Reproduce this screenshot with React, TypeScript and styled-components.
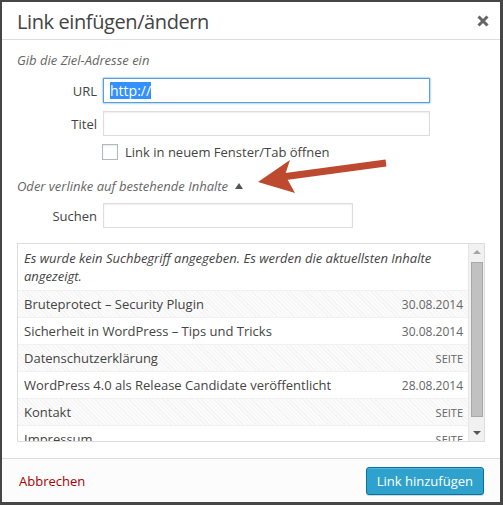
import React from 'react';
import styled, { createGlobalStyle } from 'styled-components';

const GlobalStyle = createGlobalStyle`
  html, body {
    margin: 0;
    padding: 0;
    background: #464646;
  }
  body {
    font-family: "Open Sans", "Noto Sans", sans-serif;
    color: #444;
  }
  * { box-sizing: border-box; }
`;

interface ResultItem {
  title: string;
  info: string;
}

const results: ResultItem[] = [
  { title: 'Bruteprotect – Security Plugin', info: '30.08.2014' },
  { title: 'Sicherheit in WordPress – Tips und Tricks', info: '30.08.2014' },
  { title: 'Datenschutzerklärung', info: 'SEITE' },
  { title: 'WordPress 4.0 als Release Candidate veröffentlicht', info: '28.08.2014' },
  { title: 'Kontakt', info: 'SEITE' },
  { title: 'Impressum', info: 'SEITE' },
];

const Dialog = styled.div`
  position: relative;
  margin: 2px 3px 3px 2px;
  width: 498px;
  height: 500px;
  background: #fff;
  display: flex;
  flex-direction: column;
`;

const Header = styled.div`
  height: 38px;
  border-bottom: 1px solid #ddd;
  display: flex;
  align-items: center;
  justify-content: space-between;
  padding: 0 11px 0 15px;
`;

const Title = styled.h1`
  margin: 0;
  font-size: 20px;
  font-weight: 400;
  color: #444;
  letter-spacing: -0.4px;
  line-height: 1;
  position: relative;
  top: 1px;
`;

const CloseIcon = styled.svg`
  display: block;
`;

const Body = styled.div`
  flex: 1;
  padding: 11px 16px 0 15px;
`;

const Intro = styled.p`
  margin: 0;
  font-size: 13px;
  font-style: italic;
  color: #666;
  line-height: 18px;
`;

const FieldRow = styled.div<{ $top: number }>`
  display: grid;
  grid-template-columns: 80px auto;
  column-gap: 6px;
  align-items: center;
  margin-top: ${p => p.$top}px;
`;

const Label = styled.label`
  text-align: right;
  font-size: 13px;
  color: #444;
`;

const Input = styled.div<{ $width: number; $focused?: boolean }>`
  width: ${p => p.$width}px;
  height: 25px;
  border: 1px solid ${p => (p.$focused ? '#5b9dd9' : '#ddd')};
  box-shadow: ${p =>
    p.$focused ? '0 0 2px rgba(30,140,190,0.8)' : 'inset 0 1px 2px rgba(0,0,0,0.07)'};
  background: #fff;
  display: flex;
  align-items: center;
  padding: 0 6px;
  font-size: 14px;
`;

const Selected = styled.span`
  background: #3390ff;
  color: #fff;
  line-height: 17px;
`;

const CheckRow = styled.div`
  display: flex;
  align-items: center;
  gap: 7px;
  margin: 7px 0 0 85px;
  font-size: 13px;
  color: #444;
`;

const Checkbox = styled.span`
  width: 16px;
  height: 16px;
  border: 1px solid #b4b9be;
  background: #fff;
  box-shadow: inset 0 1px 2px rgba(0,0,0,0.1);
`;

const Toggle = styled.p`
  margin: 16px 0 0;
  font-size: 13px;
  font-style: italic;
  color: #666;
  line-height: 18px;
  display: flex;
  align-items: center;
  gap: 7px;
`;

const TriangleUp = styled.span`
  width: 0;
  height: 0;
  border-left: 4px solid transparent;
  border-right: 4px solid transparent;
  border-bottom: 6px solid #555;
  margin-top: -1px;
`;

const Results = styled.div`
  margin-top: 15px;
  width: 468px;
  height: 199px;
  border: 1px solid #ddd;
  display: flex;
  overflow: hidden;
`;

const List = styled.div`
  flex: 1;
  overflow: hidden;
`;

const Notice = styled.div`
  padding: 5px 6px 5px;
  font-size: 13px;
  font-style: italic;
  color: #444;
  line-height: 18px;
  border-bottom: 1px solid #f1f1f1;
`;

const Row = styled.div<{ $striped: boolean }>`
  height: 27px;
  display: flex;
  align-items: center;
  justify-content: space-between;
  padding: 0 5px 0 6px;
  border-bottom: 1px solid #f1f1f1;
  font-size: 13px;
  color: #444;
  background: ${p =>
    p.$striped
      ? 'repeating-linear-gradient(45deg, #f4f4f4 0px, #f4f4f4 1px, #fbfbfb 1px, #fbfbfb 3px)'
      : '#fff'};
`;

const Info = styled.span<{ $upper: boolean }>`
  font-size: ${p => (p.$upper ? 11 : 12)}px;
  color: #666;
`;

const Scrollbar = styled.div`
  width: 16px;
  background: #f1f1f1;
  border-left: 1px solid #e6e6e6;
  display: flex;
  flex-direction: column;
  align-items: center;
`;

const ScrollArrow = styled.span<{ $down?: boolean }>`
  height: 16px;
  display: flex;
  align-items: center;
  justify-content: center;
  &::after {
    content: '';
    border-left: 4px solid transparent;
    border-right: 4px solid transparent;
    ${p => (p.$down ? 'border-top: 4px solid #555;' : 'border-bottom: 4px solid #a3a3a3;')}
  }
`;

const Thumb = styled.div`
  width: 12px;
  height: 155px;
  margin-top: 2px;
  background: #c1c1c1;
  border: 1px solid #a8a8a8;
`;

const Spacer = styled.div`
  flex: 1;
`;

const Footer = styled.div`
  height: 44px;
  border-top: 1px solid #ddd;
  background: #fcfcfc;
  display: flex;
  align-items: center;
  justify-content: space-between;
  padding: 0 16px 0 17px;
`;

const CancelLink = styled.a`
  font-size: 13px;
  color: #a00;
  text-decoration: none;
`;

const PrimaryButton = styled.button`
  height: 28px;
  padding: 0 10px;
  font-family: "Open Sans", sans-serif;
  font-size: 13px;
  color: #fff;
  background: #2ea2cc;
  border: 1px solid #0074a2;
  border-radius: 3px;
  box-shadow: inset 0 1px 0 rgba(120,200,230,0.5), 0 1px 0 rgba(0,0,0,0.15);
`;

const ArrowOverlay = styled.svg`
  position: absolute;
  left: 248px;
  top: 148px;
`;

export default function App() {
  return (
    <>
      <GlobalStyle />
      <Dialog>
        <Header>
          <Title>Link einfügen/ändern</Title>
          <CloseIcon width="12" height="12" viewBox="0 0 12 12">
            <path d="M1.5 1.5 L10.5 10.5 M10.5 1.5 L1.5 10.5" stroke="#666" strokeWidth="3" />
          </CloseIcon>
        </Header>
        <Body>
          <Intro>Gib die Ziel-Adresse ein</Intro>
          <FieldRow $top={9}>
            <Label>URL</Label>
            <Input $width={327} $focused>
              <Selected>http://</Selected>
            </Input>
          </FieldRow>
          <FieldRow $top={8}>
            <Label>Titel</Label>
            <Input $width={327} />
          </FieldRow>
          <CheckRow>
            <Checkbox />
            <span>Link in neuem Fenster/Tab öffnen</span>
          </CheckRow>
          <Toggle>
            Oder verlinke auf bestehende Inhalte
            <TriangleUp />
          </Toggle>
          <FieldRow $top={8}>
            <Label>Suchen</Label>
            <Input $width={250} />
          </FieldRow>
          <Results>
            <List>
              <Notice>
                Es wurde kein Suchbegriff angegeben. Es werden die aktuellsten Inhalte angezeigt.
              </Notice>
              {results.map((r, i) => (
                <Row key={r.title} $striped={i % 2 === 0}>
                  <span>{r.title}</span>
                  <Info $upper={r.info === 'SEITE'}>{r.info}</Info>
                </Row>
              ))}
            </List>
            <Scrollbar>
              <ScrollArrow />
              <Thumb />
              <Spacer />
              <ScrollArrow $down />
            </Scrollbar>
          </Results>
        </Body>
        <Footer>
          <CancelLink href="#">Abbrechen</CancelLink>
          <PrimaryButton>Link hinzufügen</PrimaryButton>
        </Footer>
        <ArrowOverlay width="140" height="48" viewBox="0 0 140 48">
          <line x1="136" y1="13" x2="32" y2="27" stroke="#bd4a2f" strokeWidth="7" />
          <path d="M8 32 L40 10 L35 25 L45 43 Z" fill="#bd4a2f" />
        </ArrowOverlay>
      </Dialog>
    </>
  );
}
